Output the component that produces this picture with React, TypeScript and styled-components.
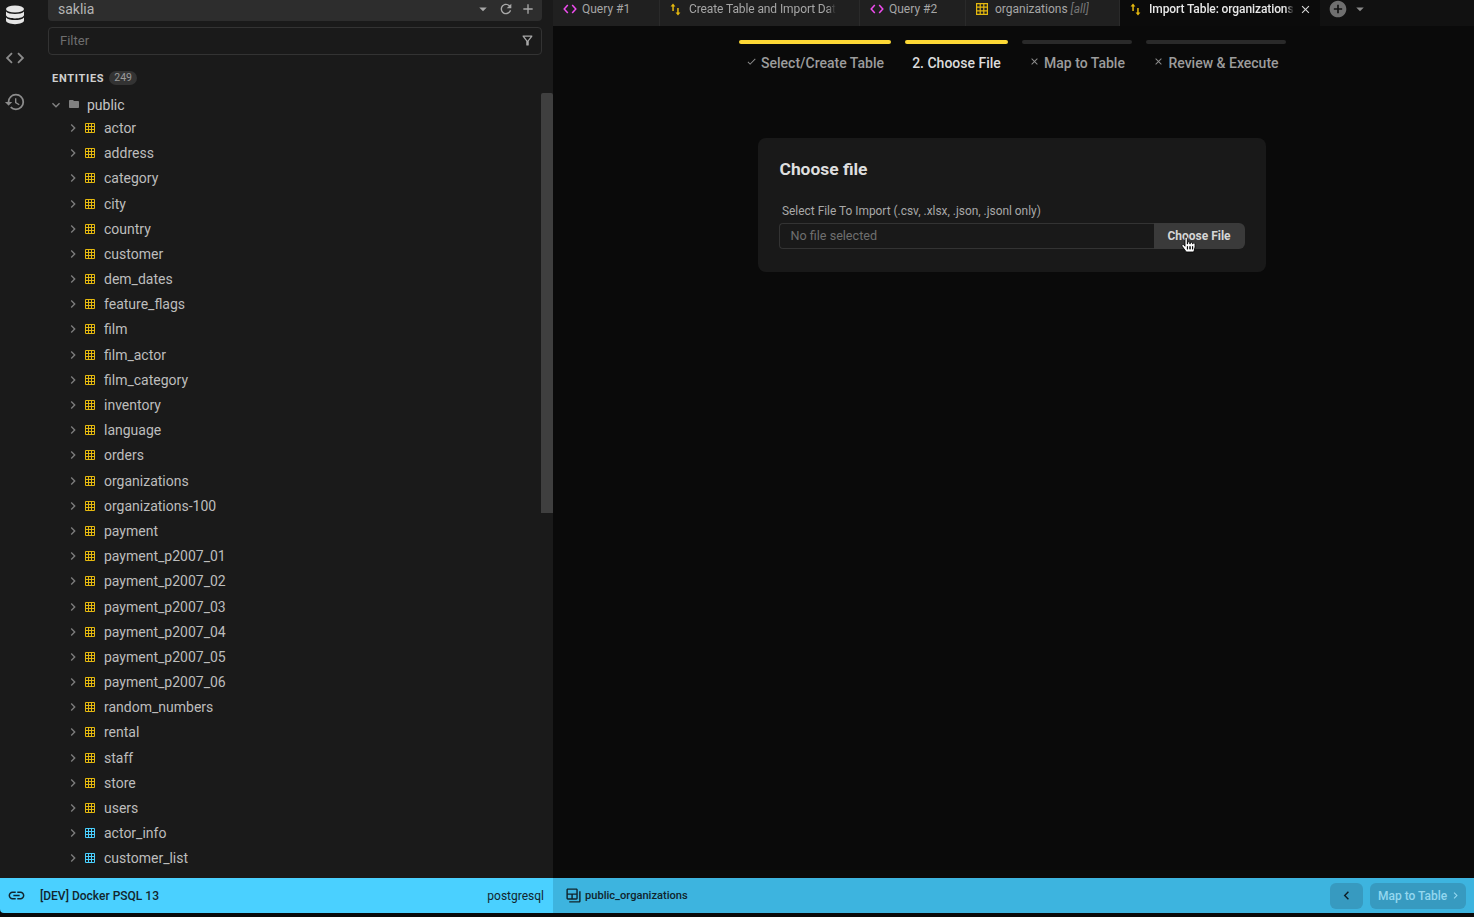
import styled, { createGlobalStyle } from 'styled-components'
import {
  MdAdd,
  MdAddCircle,
  MdArrowDropDown,
  MdCheck,
  MdChevronLeft,
  MdClose,
  MdCode,
  MdFolder,
  MdHistory,
  MdKeyboardArrowDown,
  MdKeyboardArrowRight,
  MdLink,
  MdOutlineBackupTable,
  MdOutlineFilterAlt,
  MdRefresh,
} from 'react-icons/md'
import { FaHandPointer } from 'react-icons/fa'

const GlobalStyle = createGlobalStyle`
  html, body {
    margin: 0;
    padding: 0;
    background: #0a0a0a;
    font-family: Roboto, "Liberation Sans", sans-serif;
    overflow: hidden;
  }
  * { box-sizing: border-box; }
`

const Shell = styled.div`
  width: 1474px;
  height: 917px;
  display: flex;
  flex-direction: column;
  overflow: hidden;
  background: #0a0a0a;
`

const Workspace = styled.div`
  flex: none;
  height: 878px;
  display: flex;
`

const Sidebar = styled.aside`
  flex: none;
  width: 553px;
  display: flex;
  background: #1a1a1a;
`

const Rail = styled.nav`
  flex: none;
  width: 30px;
  display: flex;
  flex-direction: column;
  align-items: center;
  color: #8c8c8c;
  font-size: 22px;
  svg { display: block; }
`

const RailDb = styled.div`
  height: 33px;
  padding-top: 5px;
  color: #e6e6e6;
`

const RailItem = styled.div`
  height: 44px;
  padding-top: 14px;
`

const SidePanel = styled.div`
  flex: 1;
  min-width: 0;
  position: relative;
  padding-left: 18px;
  display: flex;
  flex-direction: column;
`

const Selector = styled.div`
  width: 494px;
  height: 21px;
  display: flex;
  align-items: center;
  padding: 0 6px 4px 10px;
  background: #2d2d2d;
  border-radius: 0 0 4px 4px;
  color: #b4b4b4;
  font-size: 14px;
`

const SelectorName = styled.span`
  flex: 1;
`

const SelectorIcon = styled.span<{ $size: number; $gap: number }>`
  display: flex;
  margin-left: ${p => p.$gap}px;
  font-size: ${p => p.$size}px;
  color: #a8a8a8;
`

const FilterBox = styled.div`
  width: 494px;
  height: 28px;
  margin-top: 6px;
  display: flex;
  align-items: center;
  justify-content: space-between;
  padding: 0 6px 0 11px;
  border: 1px solid #333;
  border-radius: 4px;
  color: #6e6e6e;
  font-size: 13px;
  svg { color: #a8a8a8; font-size: 15px; }
`

const EntitiesHead = styled.div`
  height: 16px;
  margin: 16px 0 0 4px;
  display: flex;
  align-items: center;
  gap: 5px;
`

const EntitiesTitle = styled.span`
  color: #d0d0d0;
  font-size: 11px;
  font-weight: 700;
  letter-spacing: 0.7px;
`

const CountBadge = styled.span`
  height: 14px;
  padding: 0 5px;
  border-radius: 7px;
  background: #333;
  color: #9a9a9a;
  font-size: 10.5px;
  line-height: 14px;
`

const Tree = styled.div`
  margin-top: 7px;
  height: 800px;
  overflow: hidden;
`

const SchemaRow = styled.div`
  height: 22.2px;
  padding-top: 2px;
  display: flex;
  align-items: center;
  color: #c4c4c4;
  font-size: 14px;
  > svg:first-child { font-size: 16px; color: #858585; }
`

const FolderIcon = styled(MdFolder)`
  margin: 0 7px 0 4px;
  font-size: 12px;
  color: #808080;
  position: relative;
  top: -1px;
`

const EntityRow = styled.div`
  height: 25.2px;
  display: flex;
  align-items: center;
  padding-left: 17px;
  color: #bdbdbd;
  font-size: 14px;
  > svg:first-child { font-size: 16px; color: #7d7d7d; margin-right: 4px; }
`

const EntityLabel = styled.span`
  margin-left: 9px;
`

const TableGlyph = styled.svg<{ $color: string; $size?: number }>`
  flex: none;
  width: ${p => p.$size ?? 10}px;
  height: ${p => p.$size ?? 10}px;
  stroke: ${p => p.$color};
  fill: none;
`

const ScrollThumb = styled.div`
  position: absolute;
  top: 93px;
  right: 0;
  width: 12px;
  height: 420px;
  border-radius: 2px 2px 0 0;
  background: #3f3f3f;
`

const Main = styled.main`
  flex: 1;
  min-width: 0;
  display: flex;
  flex-direction: column;
  background: #0a0a0a;
`

const TabBar = styled.div`
  flex: none;
  height: 26px;
  display: flex;
  background: #202020;
`

const Tab = styled.div<{ $width: number; $active?: boolean }>`
  flex: none;
  width: ${p => p.$width}px;
  display: flex;
  align-items: center;
  padding: 0 0 8px 10px;
  border-right: 1px solid ${p => (p.$active ? 'transparent' : '#2a2a2a')};
  background: ${p => (p.$active ? '#0b0b0b' : 'transparent')};
  color: ${p => (p.$active ? '#e8e8e8' : '#a6a6a6')};
  font-size: 12px;
  font-weight: ${p => (p.$active ? 500 : 400)};
  white-space: nowrap;
`

const TabIcon = styled.span<{ $color: string; $gap: number }>`
  flex: none;
  display: flex;
  color: ${p => p.$color};
  margin-right: ${p => p.$gap}px;
`

const TabTitle = styled.span<{ $fade?: boolean }>`
  overflow: hidden;
  flex: 0 1 auto;
  max-width: 147px;
  ${p => p.$fade && 'letter-spacing: -0.1px; mask-image: linear-gradient(to right, #000 94%, transparent);'}
  i { color: #757575; }
`

const TabClose = styled.span`
  display: flex;
  margin-left: 5px;
  font-size: 13px;
  color: #d8d8d8;
`

const TabTools = styled.div`
  flex: 1;
  display: flex;
  align-items: center;
  padding: 0 0 8px 8px;
  background: #111;
  color: #8a8a8a;
`

const TabToolsAdd = styled(MdAddCircle)`
  font-size: 20px;
  color: #6f6f6f;
  margin-right: 3px;
`

const Stepper = styled.div`
  flex: none;
  align-self: center;
  margin: 14px 2px 0 0;
  display: flex;
  gap: 14px;
`

const Step = styled.div<{ $width: number }>`
  width: ${p => p.$width}px;
  display: flex;
  flex-direction: column;
  align-items: center;
`

const StepBar = styled.div<{ $on: boolean }>`
  align-self: stretch;
  height: 4px;
  border-radius: 2px;
  background: ${p => (p.$on ? '#fdd835' : '#2a2a2a')};
`

const StepLabel = styled.div<{ $current?: boolean }>`
  margin-top: 10px;
  display: flex;
  align-items: center;
  height: 18px;
  color: ${p => (p.$current ? '#dcdcdc' : '#9c9c9c')};
  font-size: 14px;
  font-weight: 500;
  white-space: nowrap;
  svg { font-size: 11px; margin: -3px 4px 0 0; color: #8f8f8f; }
`

const Stage = styled.div`
  flex: 1;
  display: flex;
  justify-content: center;
  padding: 66px 4px 0 0;
`

const Card = styled.section`
  width: 508px;
  height: 134px;
  padding: 21px 21px 0;
  border-radius: 8px;
  background: #191919;
`

const CardTitle = styled.h2`
  margin: 0 0 0 1px;
  height: 20px;
  color: #dedede;
  font-size: 17.4px;
  line-height: 20px;
  font-weight: 700;
`

const FieldLabel = styled.label`
  display: block;
  margin: 25px 0 0 3.5px;
  height: 14px;
  color: #a8a8a8;
  font-size: 11.9px;
  line-height: 14px;
`

const FileField = styled.div`
  position: relative;
  margin-top: 5px;
  height: 26px;
  display: flex;
`

const FileName = styled.div`
  flex: 1;
  padding-left: 11px;
  border: 1px solid #333;
  border-right: none;
  border-radius: 4px 0 0 4px;
  color: #6f6f6f;
  font-size: 12.6px;
  line-height: 24px;
`

const FileButton = styled.div`
  flex: none;
  width: 91px;
  border-radius: 0 6px 6px 0;
  background: #3a3a3a;
  color: #d6d6d6;
  font-size: 12px;
  font-weight: 700;
  line-height: 26px;
  text-align: center;
`

const PointerCursor = styled(FaHandPointer)`
  position: absolute;
  left: 402px;
  top: 14px;
  font-size: 15px;
  color: #fff;
  stroke: #000;
  stroke-width: 30px;
  overflow: visible;
`

const StatusBar = styled.footer`
  flex: none;
  height: 35px;
  display: flex;
`

const StatusLeft = styled.div`
  flex: none;
  width: 553px;
  display: flex;
  align-items: center;
  padding: 0 9px 0 7px;
  background: #4ad0ff;
  border-radius: 0 0 0 4px;
  color: #12262e;
  font-size: 12px;
`

const LinkIcon = styled(MdLink)`
  font-size: 19px;
  margin-right: 14px;
`

const ConnectionName = styled.span`
  flex: 1;
  font-weight: 500;
`

const StatusRight = styled.div`
  flex: 1;
  display: flex;
  align-items: center;
  padding: 0 8px 0 12px;
  background: #3db4df;
  color: #10242c;
  font-size: 11.1px;
`

const TableName = styled.span`
  flex: 1;
  font-weight: 500;
  margin-left: 3px;
`

const TableIcon = styled(MdOutlineBackupTable)`
  font-size: 17px;
`

const BackButton = styled.div`
  width: 33px;
  height: 26px;
  display: flex;
  align-items: center;
  justify-content: center;
  margin-right: 7px;
  border-radius: 6px;
  background: #379ac0;
  color: #0e1e26;
  font-size: 17px;
`

const NextButton = styled.div`
  width: 96px;
  height: 26px;
  display: flex;
  align-items: center;
  padding-left: 8px;
  border-radius: 6px;
  background: #379ac0;
  color: #93d7ef;
  font-size: 12px;
  font-weight: 500;
  svg { font-size: 13px; margin-left: 2px; }
`

const tables = [
  'actor', 'address', 'category', 'city', 'country', 'customer', 'dem_dates', 'feature_flags',
  'film', 'film_actor', 'film_category', 'inventory', 'language', 'orders', 'organizations',
  'organizations-100', 'payment', 'payment_p2007_01', 'payment_p2007_02', 'payment_p2007_03',
  'payment_p2007_04', 'payment_p2007_05', 'payment_p2007_06', 'random_numbers', 'rental', 'staff',
  'store', 'users',
]
const views = ['actor_info', 'customer_list']

const steps = [
  { width: 152, label: 'Select/Create Table', mark: 'check', on: true },
  { width: 103, label: '2. Choose File', mark: 'none', on: true },
  { width: 110, label: 'Map to Table', mark: 'close', on: false },
  { width: 140, label: 'Review & Execute', mark: 'close', on: false },
]

function TableMark({ color, size }: { color: string; size?: number }) {
  return (
    <TableGlyph $color={color} $size={size} viewBox="0 0 10 10" strokeWidth="1">
      <path d="M.5.5h9v9h-9zM3.5.5v9M6.5.5v9M.5 3.5h9M.5 6.5h9" />
    </TableGlyph>
  )
}

function DbMark() {
  return (
    <svg width="20" height="20" viewBox="0 0 20 20" fill="currentColor">
      <ellipse cx="10" cy="4" rx="9" ry="3.6" />
      <path d="M1 6.6C2.6 8.4 6 9 10 9s7.4-.6 9-2.4V10c0 2-4 3.4-9 3.4S1 12 1 10z" />
      <path d="M1 12.4c1.6 1.8 5 2.6 9 2.6s7.4-.8 9-2.6v3.2c0 2-4 3.6-9 3.6s-9-1.6-9-3.6z" />
    </svg>
  )
}

function ImportMark() {
  return (
    <svg width="11" height="13" viewBox="0 0 11 13" fill="currentColor">
      <path d="M3 0.5 5.4 3.5H3.8V8H2.3V3.5H.6z" />
      <path d="M8 12.5 5.6 9.5h1.6V5h1.5v4.5h1.7z" />
    </svg>
  )
}

function CodeMark() {
  return (
    <svg width="14" height="12" viewBox="0 0 14 12" fill="none" stroke="currentColor" strokeWidth="1.5">
      <path d="M4.8 2 1.2 6l3.6 4M9.2 2l3.6 4-3.6 4" />
    </svg>
  )
}

function App() {
  return (
    <>
      <GlobalStyle />
      <Shell>
        <Workspace>
          <Sidebar>
            <Rail>
              <RailDb><DbMark /></RailDb>
              <RailItem><MdCode /></RailItem>
              <RailItem><MdHistory /></RailItem>
            </Rail>
            <SidePanel>
              <Selector>
                <SelectorName>saklia</SelectorName>
                <SelectorIcon $size={18} $gap={0}><MdArrowDropDown /></SelectorIcon>
                <SelectorIcon $size={16} $gap={6}><MdRefresh /></SelectorIcon>
                <SelectorIcon $size={16} $gap={6}><MdAdd /></SelectorIcon>
              </Selector>
              <FilterBox>
                Filter
                <MdOutlineFilterAlt />
              </FilterBox>
              <EntitiesHead>
                <EntitiesTitle>ENTITIES</EntitiesTitle>
                <CountBadge>249</CountBadge>
              </EntitiesHead>
              <Tree>
                <SchemaRow>
                  <MdKeyboardArrowDown />
                  <FolderIcon />
                  public
                </SchemaRow>
                {tables.map(name => (
                  <EntityRow key={name}>
                    <MdKeyboardArrowRight />
                    <TableMark color="#e5b90f" />
                    <EntityLabel>{name}</EntityLabel>
                  </EntityRow>
                ))}
                {views.map(name => (
                  <EntityRow key={name}>
                    <MdKeyboardArrowRight />
                    <TableMark color="#4ad0ff" />
                    <EntityLabel>{name}</EntityLabel>
                  </EntityRow>
                ))}
              </Tree>
              <ScrollThumb />
            </SidePanel>
          </Sidebar>
          <Main>
            <TabBar>
              <Tab $width={107}>
                <TabIcon $color="#ee4cee" $gap={5}><CodeMark /></TabIcon>
                <TabTitle>Query #1</TabTitle>
              </Tab>
              <Tab $width={200}>
                <TabIcon $color="#e5b90f" $gap={8}><ImportMark /></TabIcon>
                <TabTitle $fade>Create Table and Import Dat</TabTitle>
              </Tab>
              <Tab $width={106}>
                <TabIcon $color="#ee4cee" $gap={5}><CodeMark /></TabIcon>
                <TabTitle>Query #2</TabTitle>
              </Tab>
              <Tab $width={154}>
                <TabIcon $color="#e5b90f" $gap={7}><TableMark color="#e5b90f" size={12} /></TabIcon>
                <TabTitle>organizations <i>[all]</i></TabTitle>
              </Tab>
              <Tab $width={200} $active>
                <TabIcon $color="#e5b90f" $gap={8}><ImportMark /></TabIcon>
                <TabTitle $fade>Import Table: organizations</TabTitle>
                <TabClose><MdClose /></TabClose>
              </Tab>
              <TabTools>
                <TabToolsAdd />
                <MdArrowDropDown size={18} />
              </TabTools>
            </TabBar>
            <Stepper>
              {steps.map(step => (
                <Step key={step.label} $width={step.width}>
                  <StepBar $on={step.on} />
                  <StepLabel $current={step.mark === 'none'}>
                    {step.mark === 'check' && <MdCheck />}
                    {step.mark === 'close' && <MdClose />}
                    {step.label}
                  </StepLabel>
                </Step>
              ))}
            </Stepper>
            <Stage>
              <Card>
                <CardTitle>Choose file</CardTitle>
                <FieldLabel>Select File To Import (.csv, .xlsx, .json, .jsonl only)</FieldLabel>
                <FileField>
                  <FileName>No file selected</FileName>
                  <FileButton>Choose File</FileButton>
                  <PointerCursor />
                </FileField>
              </Card>
            </Stage>
          </Main>
        </Workspace>
        <StatusBar>
          <StatusLeft>
            <LinkIcon />
            <ConnectionName>[DEV] Docker PSQL 13</ConnectionName>
            postgresql
          </StatusLeft>
          <StatusRight>
            <TableIcon />
            <TableName>public_organizations</TableName>
            <BackButton><MdChevronLeft /></BackButton>
            <NextButton>Map to Table<MdKeyboardArrowRight /></NextButton>
          </StatusRight>
        </StatusBar>
      </Shell>
    </>
  )
}

export default App
